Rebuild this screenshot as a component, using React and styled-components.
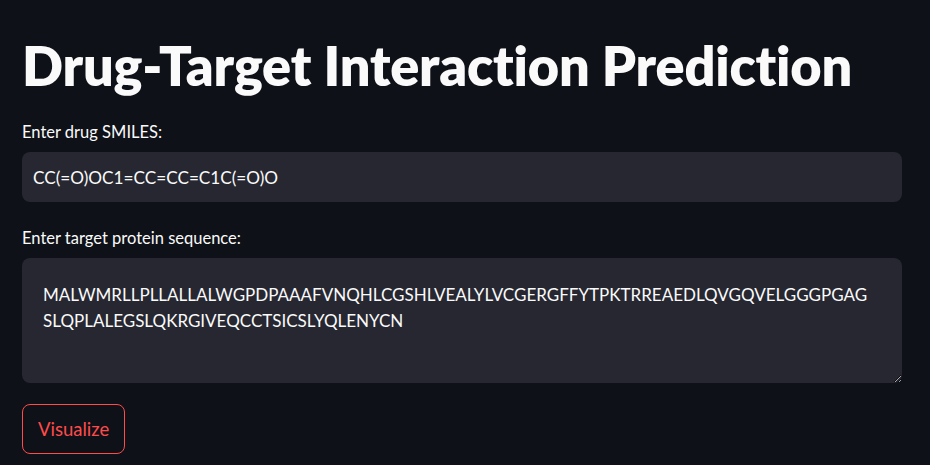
import React from 'react'
import styled, { createGlobalStyle } from 'styled-components'

const GlobalStyle = createGlobalStyle`
  html, body {
    margin: 0;
    padding: 0;
    background: #0e1117;
  }
  body {
    font-family: Lato, "Noto Sans", sans-serif;
    color: #fafafa;
  }
`

const Page = styled.div`
  width: 930px;
  height: 465px;
  box-sizing: border-box;
  padding: 30px 28px 0 22px;
  display: flex;
  flex-direction: column;
  overflow: hidden;
`

const Title = styled.h1`
  margin: 0;
  font-size: 54px;
  font-weight: 800;
  line-height: 72px;
  letter-spacing: -0.2px;
  color: #fafafa;
`

const Field = styled.div`
  display: flex;
  flex-direction: column;
  margin-top: ${p => p.$top}px;
`

const Label = styled.label`
  font-size: 16.5px;
  line-height: 20px;
  color: #fafafa;
  margin-bottom: 10px;
`

const Input = styled.input`
  box-sizing: border-box;
  width: 880px;
  height: 50px;
  border: none;
  outline: none;
  border-radius: 8px;
  background: #262730;
  color: #fafafa;
  font-family: Lato, "Noto Sans", sans-serif;
  font-size: 17.2px;
  padding: 0 11px;
`

const Area = styled.textarea`
  box-sizing: border-box;
  width: 880px;
  height: 125px;
  border: none;
  outline: none;
  border-radius: 8px;
  background: #262730;
  color: #fafafa;
  font-family: Lato, "Noto Sans", sans-serif;
  font-size: 17px;
  line-height: 26px;
  padding: 24px 21px;
  white-space: pre;
  overflow: hidden;
  resize: vertical;
  color-scheme: dark;
`

const Button = styled.button`
  align-self: flex-start;
  margin-top: 21px;
  height: 50px;
  padding: 0 15px;
  border-radius: 8px;
  border: 1px solid #ff4b4b;
  background: transparent;
  color: #ff4b4b;
  font-family: Lato, "Noto Sans", sans-serif;
  font-size: 18.5px;
  cursor: pointer;
`

const sequence =
  'MALWMRLLPLLALLALWGPDPAAAFVNQHLCGSHLVEALYLVCGERGFFYTPKTRREAEDLQVGQVELGGGPGAG\nSLQPLALEGSLQKRGIVEQCCTSICSLYQLENYCN'

export default function App() {
  return (
    <>
      <GlobalStyle />
      <Page>
        <Title>Drug-Target Interaction Prediction</Title>
        <Field $top={20}>
          <Label>Enter drug SMILES:</Label>
          <Input readOnly value="CC(=O)OC1=CC=CC=C1C(=O)O" />
        </Field>
        <Field $top={26}>
          <Label>Enter target protein sequence:</Label>
          <Area readOnly value={sequence} />
        </Field>
        <Button>Visualize</Button>
      </Page>
    </>
  )
}
